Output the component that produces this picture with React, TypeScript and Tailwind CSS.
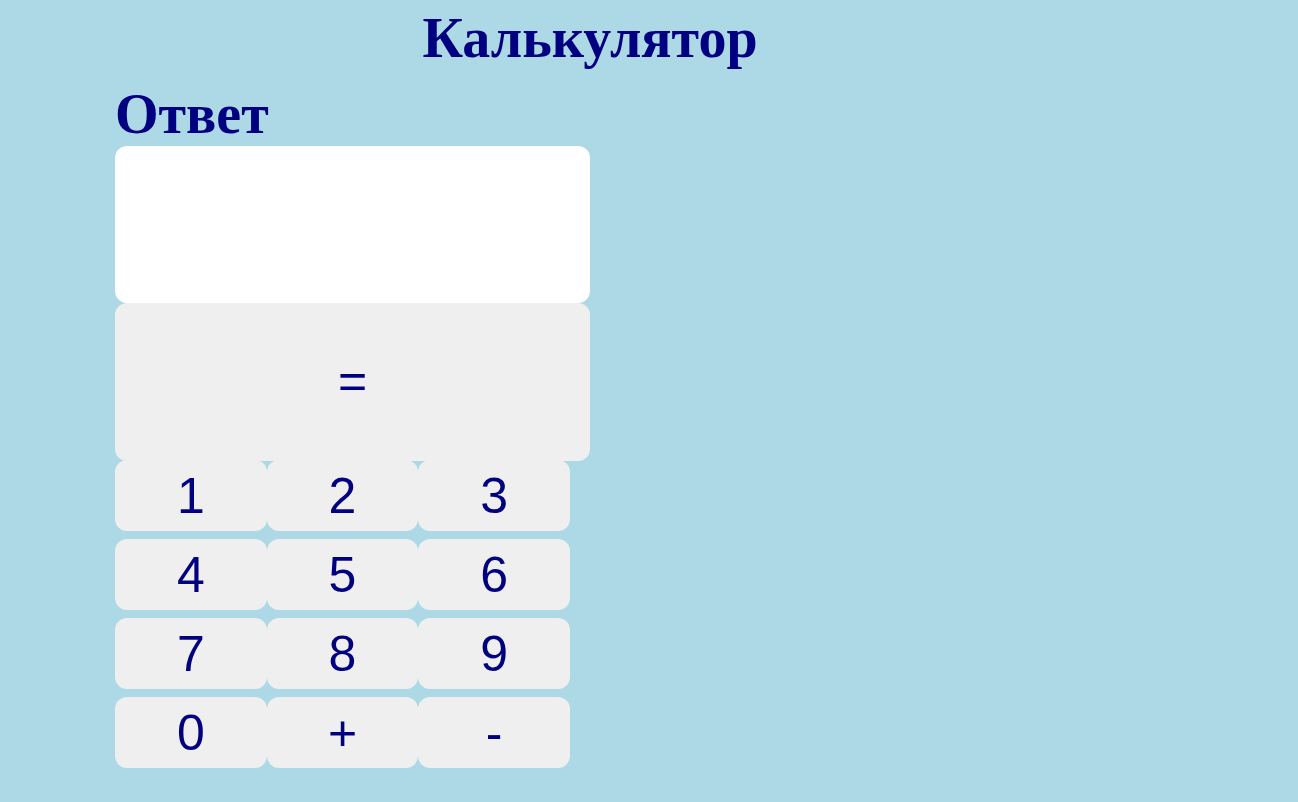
import { useState } from "react";

const keys = ["1", "2", "3", "4", "5", "6", "7", "8", "9", "0", "+", "-"];

export default function App() {
  const [value, setValue] = useState("");

  const calculate = () => {
    const terms = value.match(/[+-]?\d+/g) ?? [];
    setValue(String(terms.reduce((sum, term) => sum + Number(term), 0)));
  };

  return (
    <main className="min-h-screen bg-[#add8e6] px-[115px] pb-8 text-[#000080]">
      <div className="w-[950px] max-w-full font-['Liberation_Serif',serif] text-[56px] leading-[76px] font-bold">
        <h1 className="text-center">Калькулятор</h1>
        <h2>
          <label htmlFor="answer">Ответ</label>
        </h2>
      </div>
      <div className="w-[475px] max-w-full font-['Liberation_Sans',sans-serif] text-[50px]">
        <input
          id="answer"
          type="text"
          value={value}
          onChange={(event) => setValue(event.target.value)}
          className="-mt-[6px] block h-[157px] w-full rounded-xl bg-white px-4 text-center outline-none"
        />
        <button type="button" onClick={calculate} className="block h-[158px] w-full rounded-xl bg-[#efefef] pb-[2px]">
          =
        </button>
        <div className="-mt-px grid w-[455px] max-w-full grid-cols-3 gap-y-2">
          {keys.map((key) => (
            <button
              key={key}
              type="button"
              onClick={() => setValue(value + key)}
              className="h-[71px] rounded-xl bg-[#efefef] leading-[70px]"
            >
              {key}
            </button>
          ))}
        </div>
      </div>
    </main>
  );
}
